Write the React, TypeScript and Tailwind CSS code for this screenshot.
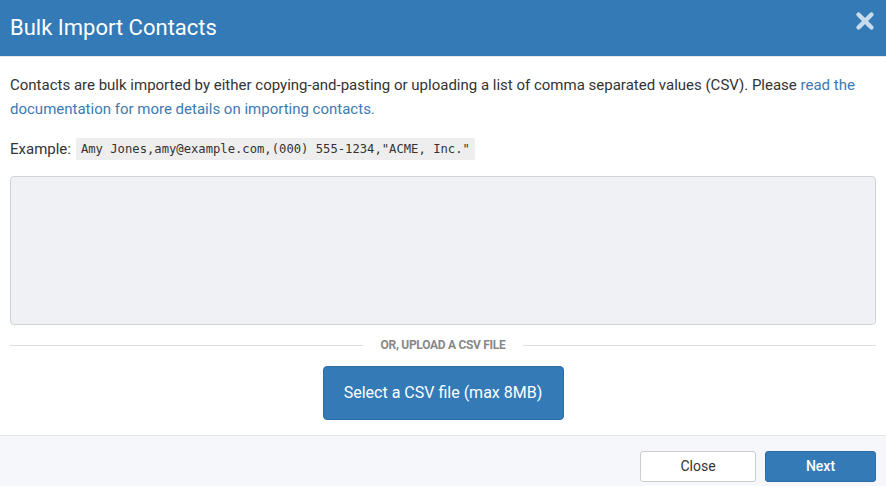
import { X } from "lucide-react";

export default function App() {
  return (
    <div className="w-[886px] h-[486px] bg-white flex flex-col overflow-hidden" style={{ fontFamily: "Roboto, 'Liberation Sans', sans-serif" }}>
      {/* header */}
      <div className="h-[57px] shrink-0 bg-[#337ab7] flex items-center justify-between pl-[10px] pr-[8px] border-b border-[#e5e5e5]">
        <h1 className="text-[22px] text-white leading-none">Bulk Import Contacts</h1>
        <X className="w-[26px] h-[26px] text-[#c9dcec] -mt-[14px]" strokeWidth={4} />
      </div>

      {/* body */}
      <div className="flex-1 px-[10px] pt-[16px] text-[15px] text-[#333]">
        <p className="leading-[24px]">
          Contacts are bulk imported by either copying-and-pasting or uploading a list of comma separated values (CSV). Please{" "}
          <a className="text-[#3c7ab5]">read the documentation for more details on importing contacts.</a>
        </p>
        <div className="mt-[17px] flex items-center h-[22px]">
          <span className="mr-[5px]">Example:</span>
          <code className="bg-[#eeeeee] px-[5px] py-[2px] text-[12.2px] text-[#333] rounded-[2px]" style={{ fontFamily: "'DejaVu Sans Mono', monospace" }}>
            Amy Jones,amy@example.com,(000) 555-1234,"ACME, Inc."
          </code>
        </div>
        <textarea className="mt-[16px] block w-full h-[149px] bg-[#eff1f5] border border-[#cfd3d8] rounded-[4px] resize-none" />
        <div className="mt-[11px] flex items-center gap-[18px]">
          <div className="flex-1 h-px bg-[#dddddd]" />
          <span className="text-[12px] font-bold text-[#888] tracking-[-0.3px]">OR, UPLOAD A CSV FILE</span>
          <div className="flex-1 h-px bg-[#dddddd]" />
        </div>
        <div className="mt-[12px] flex justify-center">
          <button className="w-[241px] h-[54px] bg-[#337ab7] text-white text-[16px] rounded-[4px] border border-[#2e6da4]">
            Select a CSV file (max 8MB)
          </button>
        </div>
      </div>

      {/* footer */}
      <div className="h-[51px] shrink-0 bg-[#f5f7fa] border-t border-[#e5e7eb] flex items-start justify-end gap-[9px] pt-[15px] pr-[10px]">
        <button className="w-[116px] h-[31px] bg-white border border-[#ccc] rounded-[3px] text-[14px] text-[#333]">Close</button>
        <button className="w-[111px] h-[31px] bg-[#337ab7] border border-[#2e6da4] rounded-[3px] text-[14px] text-white font-medium">Next</button>
      </div>
    </div>
  );
}
